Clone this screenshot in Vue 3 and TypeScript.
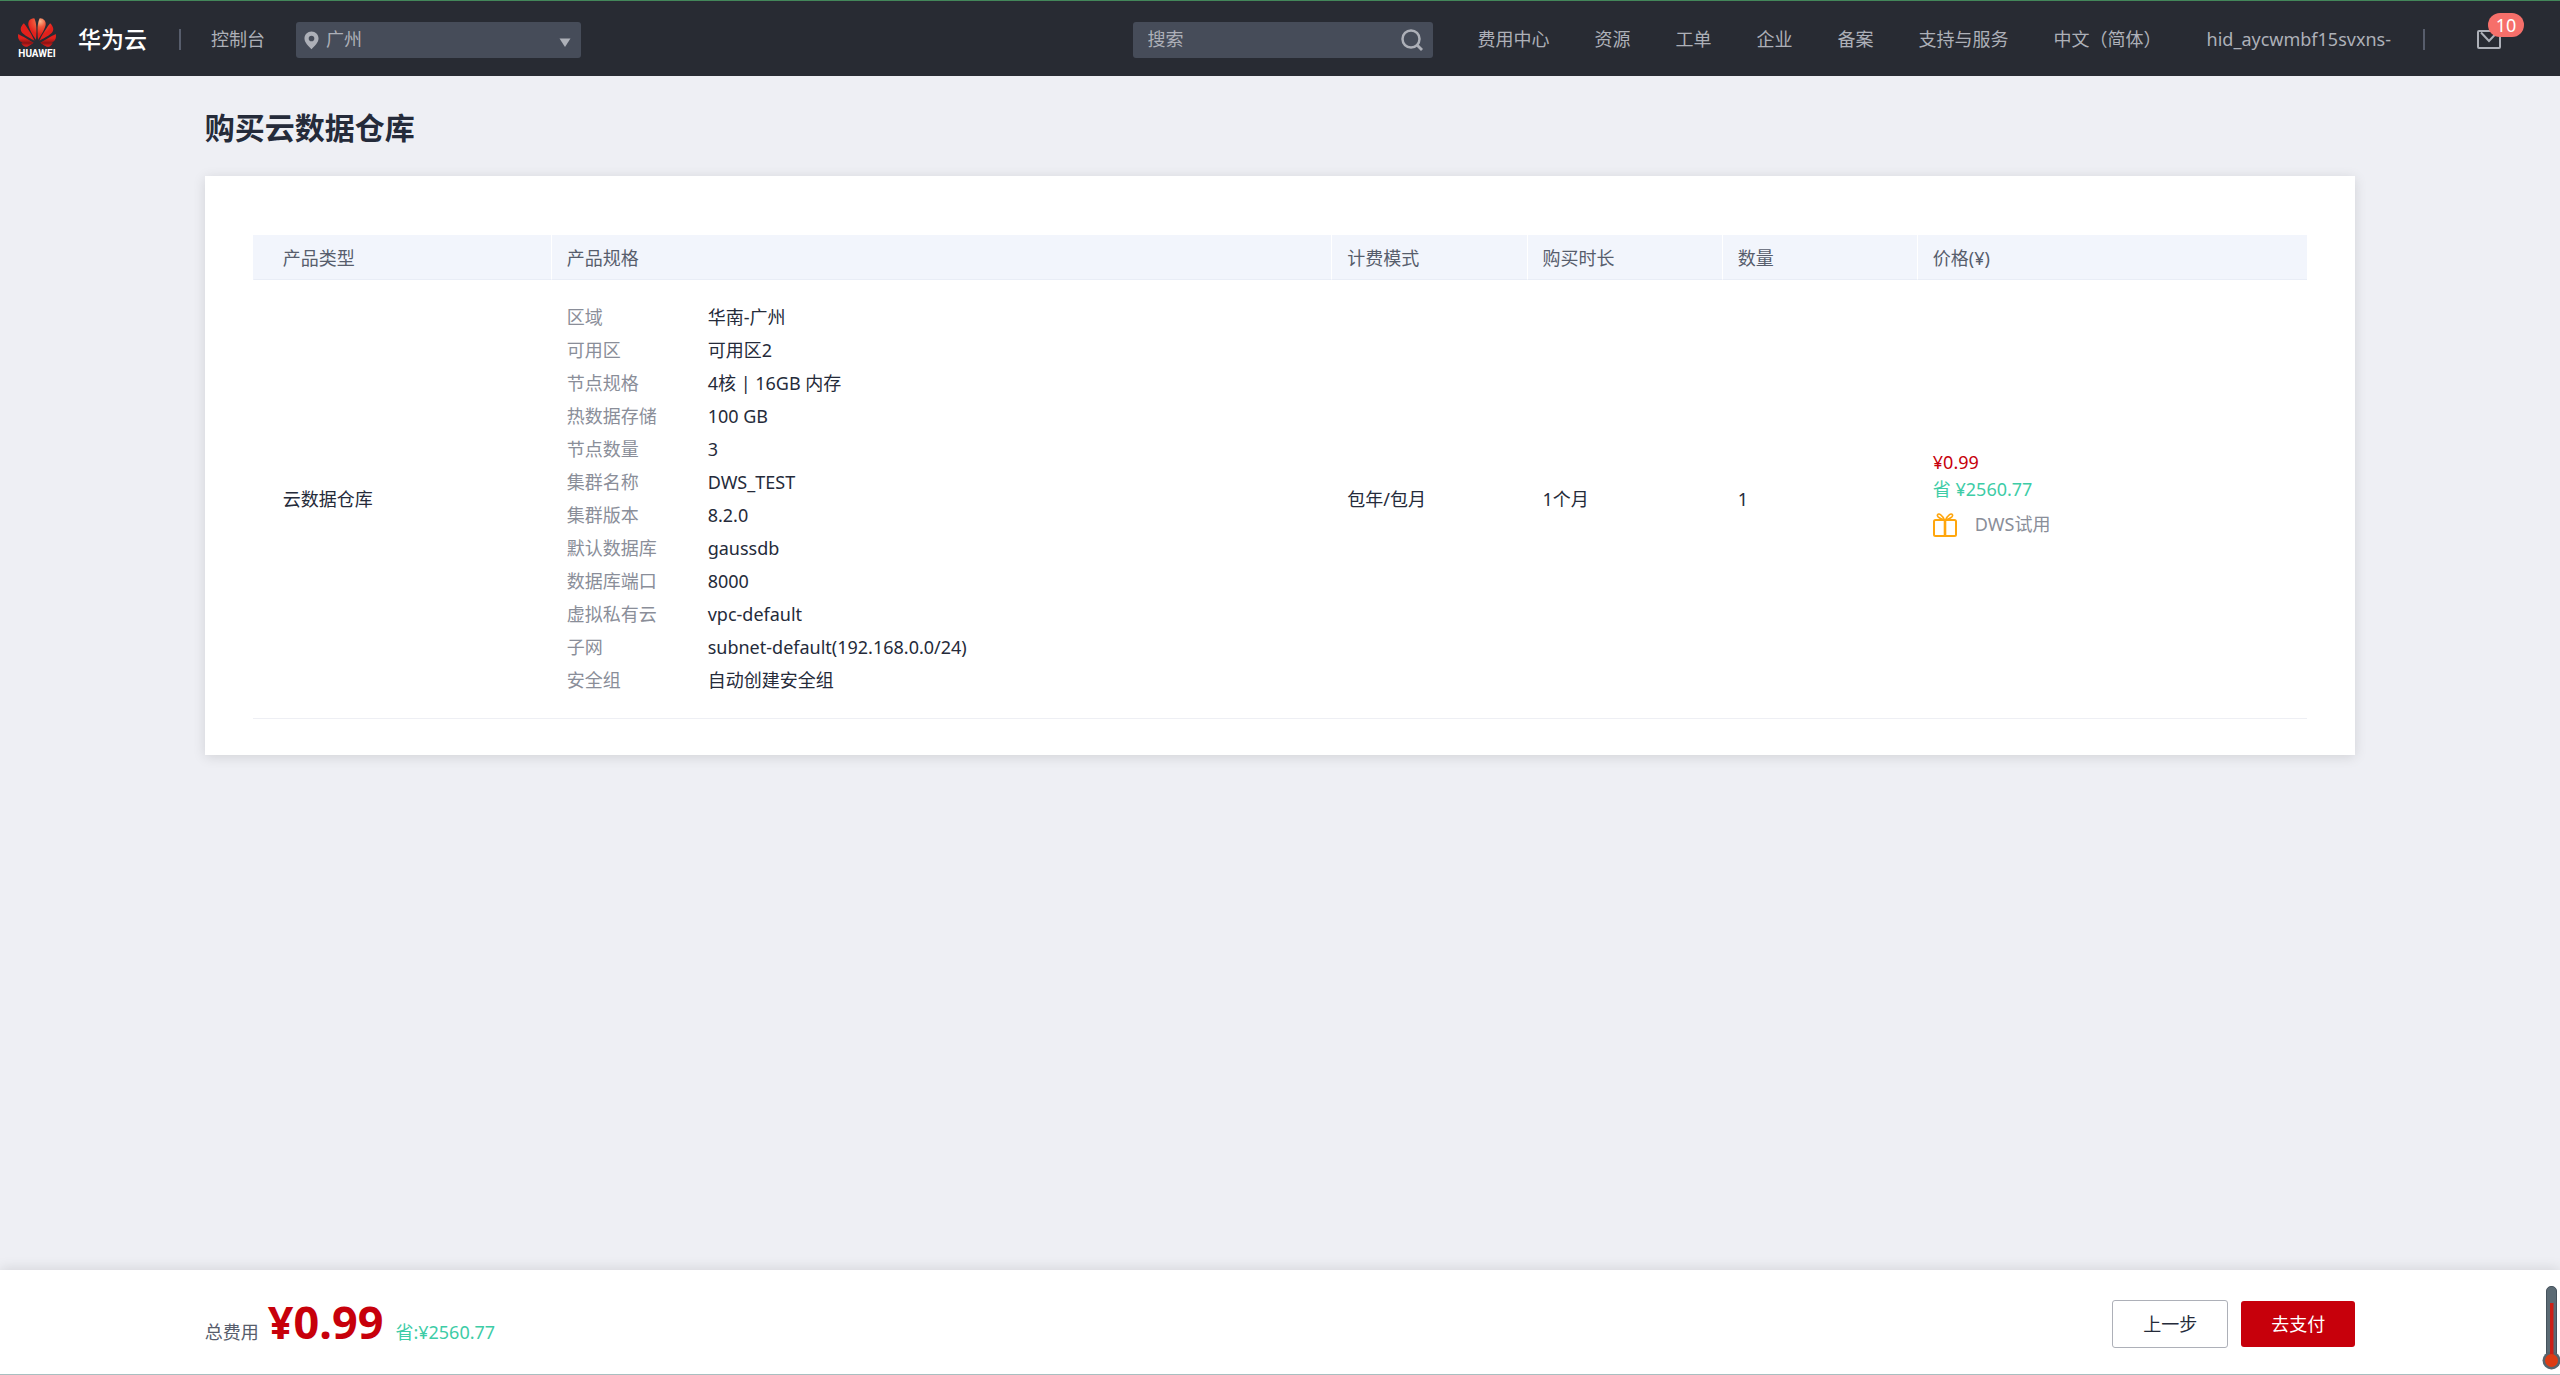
<script setup lang="ts">
import { ref } from 'vue'

interface SpecItem {
  label: string
  value: string
}

const region = ref<string>('广州')
const keyword = ref<string>('')
const unread = ref<number>(10)

const navLinks: string[] = ['费用中心', '资源', '工单', '企业', '备案', '支持与服务', '中文（简体）', 'hid_aycwmbf15svxns-']

const columns: string[] = ['产品类型', '产品规格', '计费模式', '购买时长', '数量', '价格(¥)']

const specs: SpecItem[] = [
  { label: '区域', value: '华南-广州' },
  { label: '可用区', value: '可用区2' },
  { label: '节点规格', value: '4核 | 16GB 内存' },
  { label: '热数据存储', value: '100 GB' },
  { label: '节点数量', value: '3' },
  { label: '集群名称', value: 'DWS_TEST' },
  { label: '集群版本', value: '8.2.0' },
  { label: '默认数据库', value: 'gaussdb' },
  { label: '数据库端口', value: '8000' },
  { label: '虚拟私有云', value: 'vpc-default' },
  { label: '子网', value: 'subnet-default(192.168.0.0/24)' },
  { label: '安全组', value: '自动创建安全组' },
]
</script>

<template>
  <div class="page">
    <header class="topbar">
      <a class="brand" href="#">
        <span class="logo">
          <svg class="logo-mark" viewBox="0 2.9 24 18.2" aria-hidden="true">
            <defs>
              <radialGradient id="petal" gradientUnits="userSpaceOnUse" cx="14" cy="5" r="8">
                <stop offset="0" stop-color="#fbb98c" />
                <stop offset="0.45" stop-color="#f0573a" />
                <stop offset="1" stop-color="#e2211c" />
              </radialGradient>
              <linearGradient id="shade" gradientUnits="userSpaceOnUse" x1="0" y1="3" x2="0" y2="21">
                <stop offset="0.7" stop-color="#7a1010" stop-opacity="0" />
                <stop offset="0.87" stop-color="#6a0c10" stop-opacity="0.75" />
                <stop offset="1" stop-color="#c01a1a" stop-opacity="0.2" />
              </linearGradient>
              <path
                id="flower"
                d="M3.67 6.14S1.82 7.91 1.72 9.78v.35c.08 1.51 1.22 2.4 1.22 2.4 1.83 1.79 6.26 4.04 7.3 4.55 0 0 .06.03.1-.01l.02-.04v-.04C7.52 10.8 3.67 6.14 3.67 6.14zM9.65 18.6c-.02-.08-.1-.08-.1-.08l-7.38.26c.8 1.43 2.15 2.53 3.56 2.2.96-.25 3.16-1.78 3.88-2.3.06-.05.04-.09.04-.09zm.08-.13C6.49 16.28.21 12.9.21 12.9c-.15.45-.2.9-.21 1.3v.07c0 1.07.4 1.82.4 1.82.8 1.69 2.34 2.2 2.34 2.2.7.3 1.4.31 1.4.31.12.02 4.4 0 5.54 0 .05 0 .08-.05.08-.05v-.06c0-.03-.03-.05-.03-.05zM9.06 3.19a3.42 3.42 0 0 0-2.57 3.15v.41c.03.6.16 1.05.16 1.05.66 2.9 3.86 7.65 4.55 8.65.05.05.1.03.1.03a.1.1 0 0 0 .06-.1c1.06-10.6-1.11-13.42-1.11-13.42-.32.02-1.19.23-1.19.23zm8.3 2.27s-.49-1.8-2.44-2.28c0 0-.57-.14-1.17-.22 0 0-2.18 2.81-1.12 13.43.01.07.06.08.06.08.07.03.1-.03.1-.03.72-1.03 3.9-5.76 4.55-8.64 0 0 .36-1.4.02-2.34zm-2.92 13.07s-.07 0-.09.05c0 0-.01.07.03.1.7.51 2.85 2 3.88 2.3 0 0 .16.05.43.06h.14c.69-.02 1.9-.37 3-2.26l-7.4-.25zm7.83-8.41c.14-2.06-1.94-3.97-1.94-3.98 0 0-3.85 4.66-6.67 10.8 0 0-.03.08.02.13l.04.01h.06c1.06-.53 5.46-2.77 7.28-4.54 0 0 1.15-.93 1.21-2.42zm1.52 2.81s-6.28 3.37-9.52 5.55c0 0-.05.04-.03.11 0 0 .03.06.07.06 1.16 0 5.56 0 5.67-.02 0 0 .57-.02 1.27-.29 0 0 1.56-.5 2.37-2.27 0 0 .73-1.45.17-3.14z"
              />
            </defs>
            <use href="#flower" fill="url(#petal)" />
            <use href="#flower" fill="url(#shade)" />
          </svg>
          <span class="logo-word">HUAWEI</span>
        </span>
        <span class="brand-name">华为云</span>
      </a>
      <span class="divider"></span>
      <a class="console" href="#">控制台</a>
      <div class="region">
        <svg class="pin" viewBox="0 0 16 20" aria-hidden="true">
          <path
            fill="#adb0b8"
            fill-rule="evenodd"
            d="M8 0.5C3.8 0.5 0.5 3.8 0.5 7.9c0 4.2 4.2 8.4 7.5 11.3 3.3-2.9 7.500-7.100 7.500-11.300C15.500 3.800 12.200 0.500 8 0.500zM8 4.800a3 3 0 1 1 0 6 3 3 0 0 1 0-6z"
          />
        </svg>
        <select v-model="region" class="region-select" aria-label="区域">
          <option>广州</option>
        </select>
        <svg class="caret" viewBox="0 0 12 9" aria-hidden="true"><path fill="#adb0b8" d="M0.500 0.500h11L6 9z" /></svg>
      </div>

      <div class="search">
        <input v-model="keyword" class="search-input" type="text" placeholder="搜索" aria-label="搜索" />
        <button class="search-button" type="button" aria-label="搜索">
          <svg viewBox="0 0 22 22" aria-hidden="true">
            <circle cx="10" cy="10" r="8.500" fill="none" stroke="#adb0b8" stroke-width="2.500" />
            <path d="M15.500 15.500l5.500 5.500" stroke="#adb0b8" stroke-width="2.800" />
          </svg>
        </button>
      </div>

      <nav class="nav">
        <a v-for="link in navLinks" :key="link" href="#">{{ link }}</a>
      </nav>
      <span class="divider"></span>
      <a class="mail" href="#" aria-label="消息">
        <svg viewBox="0 0 24 19" fill="none" stroke="#adb0b8" stroke-width="2" aria-hidden="true">
          <rect x="1" y="1" width="22" height="17" rx="1" />
          <path d="M4 2.500L12 11 20 2.500" />
        </svg>
        <span class="badge">{{ unread }}</span>
      </a>
    </header>

    <main class="content">
      <h1 class="title">购买云数据仓库</h1>
      <section class="card">
        <table class="order">
          <colgroup>
            <col class="col-type" />
            <col class="col-spec" />
            <col class="col-small" />
            <col class="col-small" />
            <col class="col-small" />
            <col class="col-price" />
          </colgroup>
          <thead>
            <tr>
              <th v-for="name in columns" :key="name" scope="col">{{ name }}</th>
            </tr>
          </thead>
          <tbody>
            <tr>
              <td>云数据仓库</td>
              <td>
                <dl class="specs">
                  <div v-for="item in specs" :key="item.label" class="spec">
                    <dt>{{ item.label }}</dt>
                    <dd>{{ item.value }}</dd>
                  </div>
                </dl>
              </td>
              <td>包年/包月</td>
              <td>1个月</td>
              <td>1</td>
              <td>
                <div class="price">¥0.99</div>
                <div class="saving">省 ¥2560.77</div>
                <div class="promo">
                  <svg class="gift" viewBox="0 0 24 24" fill="none" stroke="#ffa60d" stroke-width="2" aria-hidden="true">
                    <rect x="1" y="7" width="22" height="16" rx="1.500" />
                    <path d="M12 7v16" stroke-width="2.600" />
                    <path
                      d="M11.500 7C9 6.500 3.500 4 4.500 1.800 5.800 -0.400 9.500 2.500 11.500 7zM12.500 7c2.500-.5 8-3 7-5.200C18.200 -0.400 14.500 2.500 12.500 7z"
                      stroke-width="1.600"
                    />
                  </svg>
                  <span>DWS试用</span>
                </div>
              </td>
            </tr>
          </tbody>
        </table>
      </section>
    </main>

    <footer class="paybar">
      <div class="total">
        <span class="total-label">总费用</span>
        <strong class="total-price">¥0.99</strong>
        <span class="total-saving">省:¥2560.77</span>
      </div>
      <div class="actions">
        <button class="btn btn-default" type="button">上一步</button>
        <button class="btn btn-primary" type="button">去支付</button>
      </div>
      <svg class="thermometer" viewBox="0 0 18 84" aria-hidden="true">
        <rect x="4.500" y="0.500" width="10" height="72" rx="4.500" fill="#5b6a74" stroke="#45525c" />
        <circle cx="9.500" cy="74.500" r="9" fill="#56646e" />
        <rect x="8" y="17" width="3.500" height="54" fill="#cc1f16" />
        <circle cx="9.500" cy="74.500" r="6.500" fill="#dd3c14" />
      </svg>
    </footer>
  </div>
</template>

<style>
body {
  margin: 0;
}
</style>

<style scoped>
.page {
  display: flex;
  flex-direction: column;
  min-height: 100vh;
  box-sizing: border-box;
  background: #eeeff4;
  color: #252b3a;
  font-family: "Noto Sans", "Noto Sans CJK SC", sans-serif;
  font-size: 18px;
  line-height: 27px;
}

a {
  color: inherit;
  text-decoration: none;
}

.topbar {
  display: flex;
  align-items: center;
  height: 76px;
  box-sizing: border-box;
  padding: 2px 59px 0 18px;
  border-top: 1px solid #43875a;
  background: #282b33;
  color: #adb0b8;
}

.brand {
  display: flex;
  align-items: center;
  gap: 22px;
}

.logo {
  display: flex;
  flex-direction: column;
  align-items: center;
  width: 38px;
}

.logo-mark {
  width: 38px;
  height: 29px;
}

.logo-word {
  color: #fff;
  font-family: Roboto, sans-serif;
  font-size: 10px;
  font-weight: 700;
  line-height: 14px;
}

.brand-name {
  color: #fff;
  font-size: 23px;
  font-weight: 500;
}

.divider {
  width: 2px;
  height: 21px;
  margin-left: 32px;
  background: #575d6c;
}

.console {
  margin-left: 30px;
}

.region {
  position: relative;
  width: 285px;
  height: 36px;
  margin-left: 31px;
}

.region-select {
  width: 100%;
  height: 36px;
  padding: 0 30px;
  border: 0;
  border-radius: 3px;
  appearance: none;
  background: #464c59;
  color: inherit;
  font: inherit;
}

.pin {
  position: absolute;
  top: 9px;
  left: 8px;
  width: 15px;
  height: 19px;
}

.caret {
  position: absolute;
  top: 16px;
  right: 10px;
  width: 12px;
  height: 9px;
}

.search {
  display: flex;
  align-items: center;
  width: 300px;
  height: 36px;
  margin-left: auto;
  border-radius: 3px;
  background: #464c59;
}

.search-input {
  flex: 1;
  min-width: 0;
  padding: 0 0 0 15px;
  border: 0;
  outline: 0;
  background: transparent;
  color: inherit;
  font: inherit;
}

.search-input::placeholder {
  color: #adb0b8;
  opacity: 1;
}

.search-button {
  display: flex;
  padding: 0 10px;
  border: 0;
  background: transparent;
}

.search-button svg {
  width: 22px;
  height: 22px;
}

.nav {
  display: flex;
  gap: 45px;
  margin-left: 45px;
  white-space: nowrap;
}

.mail {
  position: relative;
  display: flex;
  margin-left: 52px;
}

.mail svg {
  width: 24px;
  height: 19px;
}

.badge {
  position: absolute;
  top: -17px;
  left: 11px;
  width: 36px;
  border-radius: 12px;
  background: #f66f6a;
  color: #fff;
  line-height: 24px;
  text-align: center;
}

.content {
  flex: 1;
  margin: 0 8%;
}

.title {
  margin: 32px 0 28px;
  font-size: 30px;
  font-weight: 700;
  line-height: 40px;
}

.card {
  padding: 59px 48px 36px;
  background: #fff;
  box-shadow: 0 2px 12px rgba(0, 0, 0, 0.12);
}

.order {
  width: 100%;
  border-collapse: separate;
  border-spacing: 0;
  table-layout: fixed;
}

.col-type {
  width: 14.5%;
}

.col-spec {
  width: 38%;
}

.col-small {
  width: 9.5%;
}

.col-price {
  width: 19%;
}

th {
  height: 45px;
  box-sizing: border-box;
  padding: 2px 16px 0 15px;
  border-bottom: 1px solid #e9edf6;
  border-left: 1px solid #fff;
  background: #f2f5fc;
  color: #575d6c;
  font-weight: 400;
  text-align: left;
}

td {
  padding: 21px 16px;
  border-bottom: 1px solid #eeeff4;
}

th:first-child {
  border-left-color: #f2f5fc;
  padding-left: 29px;
}

td:first-child {
  padding-left: 30px;
}

.specs {
  margin: 0;
}

.spec {
  display: flex;
  line-height: 33px;
}

.spec dt {
  width: 141px;
  color: #8a8e99;
}

.spec dd {
  margin: 0;
}

.price {
  color: #c7000b;
}

.saving {
  color: #3dcca6;
}

.promo {
  display: flex;
  align-items: center;
  gap: 18px;
  margin: 8px 0 11px;
  color: #8a8e99;
}

.gift {
  width: 24px;
  height: 24px;
}

.paybar {
  position: relative;
  display: flex;
  align-items: center;
  justify-content: space-between;
  height: 105px;
  box-sizing: border-box;
  padding: 4px 8% 0;
  border-bottom: 1px solid #a8bfc0;
  background: #fff;
  box-shadow: 0 -2px 12px rgba(0, 0, 0, 0.1);
}

.total {
  display: flex;
  align-items: baseline;
  padding-bottom: 4px;
}

.total-label {
  color: #575d6c;
}

.total-price {
  margin-left: 9px;
  color: #c7000b;
  font-size: 45px;
  line-height: 60px;
}

.total-saving {
  margin-left: 12px;
  color: #3dcca6;
}

.actions {
  display: flex;
  align-items: center;
  gap: 13px;
}

.btn {
  box-sizing: border-box;
  border-radius: 3px;
  font: inherit;
}

.btn-default {
  width: 116px;
  height: 48px;
  border: 1px solid #adb0b8;
  background: #fff;
  color: #252b3a;
}

.btn-primary {
  width: 114px;
  height: 46px;
  border: 0;
  background: #c7000b;
  color: #fff;
}

.thermometer {
  position: absolute;
  right: 0;
  bottom: 4px;
  width: 18px;
  height: 84px;
}
</style>
